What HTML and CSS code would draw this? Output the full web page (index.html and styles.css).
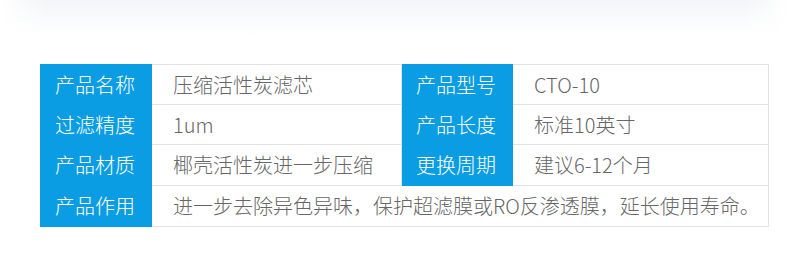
FILE: index.html
```html
<!DOCTYPE html>
<html lang="zh-CN">
<head>
<meta charset="utf-8">
<title>压缩活性炭滤芯</title>
<link rel="stylesheet" href="styles.css">
</head>
<body>
<div class="top-shade"></div>
<table class="spec">
  <colgroup>
    <col class="c-label">
    <col class="c-val1">
    <col class="c-label">
    <col class="c-val2">
  </colgroup>
  <tr class="r1">
    <th>产品名称</th><td>压缩活性炭滤芯</td>
    <th>产品型号</th><td>CTO-10</td>
  </tr>
  <tr class="r2">
    <th>过滤精度</th><td>1um</td>
    <th>产品长度</th><td>标准10英寸</td>
  </tr>
  <tr class="r3">
    <th>产品材质</th><td>椰壳活性炭进一步压缩</td>
    <th>更换周期</th><td>建议6-12个月</td>
  </tr>
  <tr class="r4">
    <th>产品作用</th><td colspan="3">进一步去除异色异味，保护超滤膜或RO反渗透膜，延长使用寿命。</td>
  </tr>
</table>
</body>
</html>
```
FILE: styles.css
```css
html, body {
  margin: 0;
  padding: 0;
  background: #fff;
}
body {
  font-family: "Noto Sans CJK SC", "Noto Sans", sans-serif;
  width: 790px;
  height: 280px;
  overflow: hidden;
}
.top-shade {
  height: 36px;
  background: linear-gradient(to bottom, #f3f4f7 0%, #f9fafb 45%, #ffffff 100%);
  -webkit-mask-image: linear-gradient(to right, transparent 0, #000 6%, #000 94%, transparent 100%);
  mask-image: linear-gradient(to right, transparent 0, #000 6%, #000 94%, transparent 100%);
}
.spec {
  margin: 28px 0 0 40px;
  width: 728px;
  border-collapse: collapse;
  table-layout: fixed;
  font-size: 20px;
  line-height: 24px;
  font-weight: 300;
}
.c-label { width: 111px; }
.c-val1 { width: 250px; }
.c-val2 { width: 256px; }
.spec th, .spec td {
  padding: 0;
  white-space: nowrap;
  vertical-align: middle;
}
.spec th {
  background: #0a9de3;
  color: #fff;
  font-weight: 300;
  text-align: left;
  padding-left: 14px;
  border: 1px solid #0a9de3;
}
.spec td {
  color: #666;
  padding-left: 21px;
  border: 1px solid #e2e2e2;
}
.r1 th, .r1 td, .r2 th, .r2 td { height: 39px; }
.r3 th, .r3 td, .r4 th, .r4 td { height: 40px; }
```
